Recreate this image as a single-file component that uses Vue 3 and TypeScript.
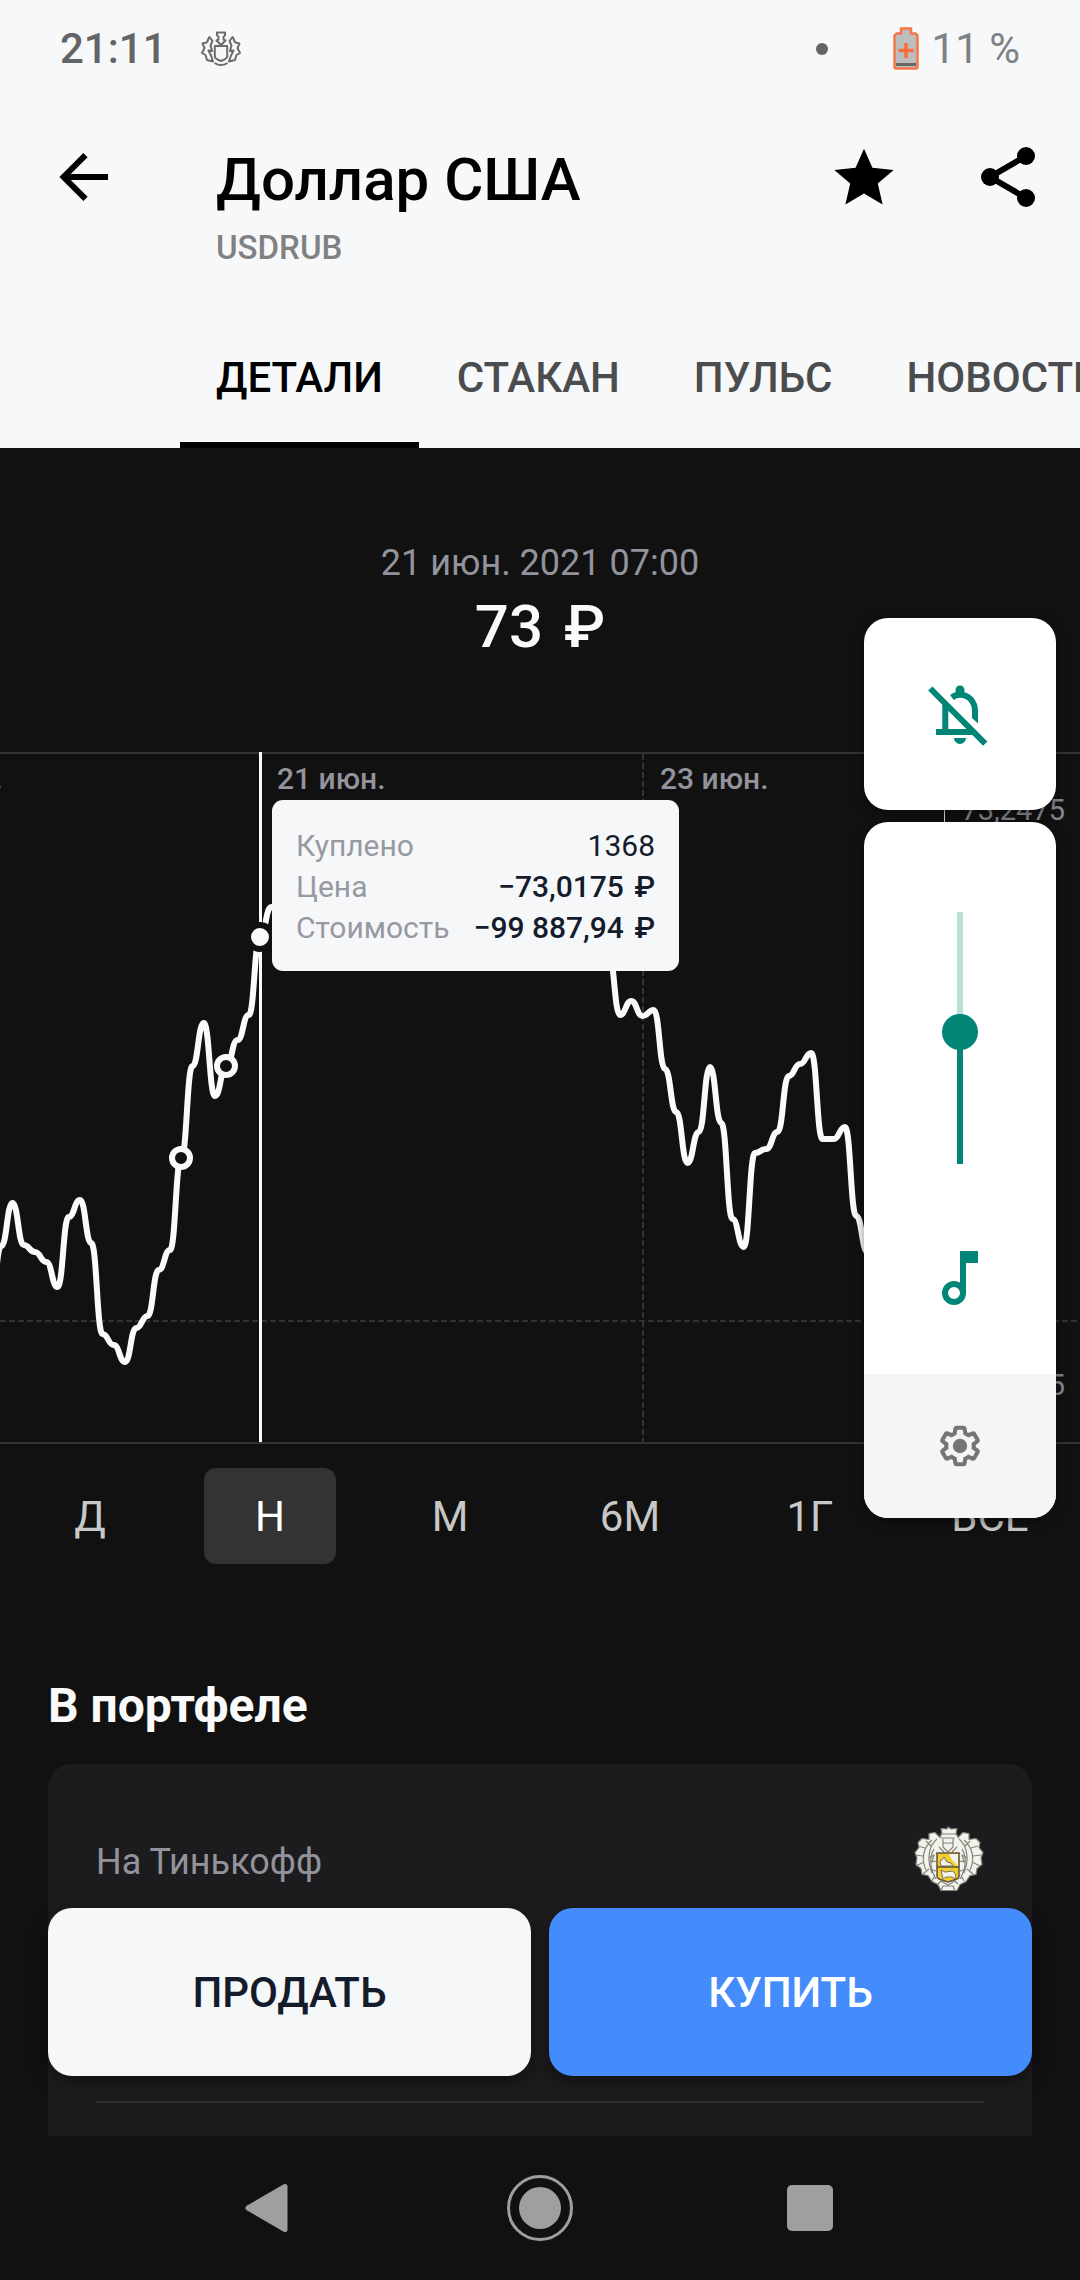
<script setup lang="ts">
import { computed, ref } from 'vue'

interface Tab {
  id: string
  label: string
}

interface TradeRow {
  label: string
  value: string
  currency: string
}

const tabs: Tab[] = [
  { id: 'details', label: 'ДЕТАЛИ' },
  { id: 'book', label: 'СТАКАН' },
  { id: 'pulse', label: 'ПУЛЬС' },
  { id: 'news', label: 'НОВОСТИ' },
]
const activeTab = ref('details')

const periods: string[] = ['Д', 'Н', 'М', '6М', '1Г', 'ВСЕ']
const activePeriod = ref('Н')

const trade: TradeRow[] = [
  { label: 'Куплено', value: '1368', currency: '' },
  { label: 'Цена', value: '−73,0175', currency: '₽' },
  { label: 'Стоимость', value: '−99 887,94', currency: '₽' },
]

// Quotes are evenly spaced; ORIGIN is the x of the selected moment.
const STEP = 11.25
const ORIGIN = 260
const before: number[] = [
  560, 494, 451, 493, 500, 510, 535, 465, 448, 491, 582, 593, 610, 576, 564, 518, 498, 406, 314,
  271, 344, 314, 288, 263, 185, 155,
]
const after: number[] = [
  203, 263, 249, 264, 258, 317, 360, 411, 380, 315, 371, 467, 495, 401, 397, 380, 324, 312, 301,
  387, 387, 375, 464, 500,
]
const points = [
  ...before.map((y, i) => ({ x: ORIGIN + (i - 24) * STEP, y })),
  ...after.map((y, i) => ({ x: ORIGIN + (i + 31) * STEP, y })),
]
const linePath = points
  .map((p, i) => {
    if (i === 0) return `M${p.x} ${p.y}`
    const prev = points[i - 1]
    const mid = (prev.x + p.x) / 2
    return `C${mid} ${prev.y} ${mid} ${p.y} ${p.x} ${p.y}`
  })
  .join('')

const deals = [
  { x: 181, y: 406 },
  { x: 226, y: 314 },
]

const volume = ref(53)
const volumeFill = computed(() => `${18 + (216 * volume.value) / 100}px`)
</script>

<template>
  <div class="screen">
    <header class="header">
      <div class="status">
        <span class="clock">21:11</span>
        <svg class="status-crest" viewBox="0 0 42 36" aria-hidden="true">
          <g fill="none" stroke="#6b6c6d" stroke-width="2" stroke-linejoin="round">
            <path d="M17 1.500h8v3l-1.500 1v3l2 1-4.500 4.500-4.500-4.500 2-1v-3l-1.500-1z" />
            <path d="M14.800 15h12.400v10.500c0 2-2 3-6.200 4.500-4.200-1.500-6.200-2.500-6.200-4.500z" />
            <path d="M14.500 32c4 2.500 9 2.500 13 0" />
            <path d="M9.500 6c-2 2-1 4-3 5.500l-4 1 2 4.500-2.500 5 3.500 2 1.500 5 6 1.500-2-6-2.500-5 3.500.5-1.500-5.500 2-4.500z" />
            <path transform="matrix(-1 0 0 1 42 0)" d="M9.500 6c-2 2-1 4-3 5.500l-4 1 2 4.500-2.500 5 3.500 2 1.500 5 6 1.500-2-6-2.500-5 3.500.5-1.500-5.500 2-4.500z" />
          </g>
        </svg>
        <span class="dot"></span>
        <svg class="battery" viewBox="0 0 26 44" aria-hidden="true">
          <path d="M8 1.500h10v5h4.500l2 2V40q0 1.500-1.500 1.500H3Q1.500 41.500 1.500 40V8.500l2-2H8z" fill="#bdbdbd" stroke="#f7754a" stroke-width="2.500" />
          <path d="M3 37.500h20" stroke="#666" stroke-width="3" />
          <path d="M13 16v15M5.500 23.500h15" stroke="#f76d3c" stroke-width="3.500" />
        </svg>
        <span class="charge">11 %</span>
      </div>

      <div class="toolbar">
        <button class="icon-button" type="button" aria-label="Назад">
          <svg viewBox="0 0 24 24"><path d="M20 12H5.500M12.500 4.700 5.200 12l7.300 7.300" fill="none" stroke="#000" stroke-width="2" /></svg>
        </button>
        <div class="heading">
          <h1>Доллар США</h1>
          <p>USDRUB</p>
        </div>
        <button class="icon-button" type="button" aria-label="В избранное">
          <svg viewBox="0 0 24 24"><path d="M12 2.600 14.800 8.900 21.900 9.700 16.600 14.200 18.200 21.200 12 17.500 5.800 21.200 7.400 14.200 2.100 9.700 9.200 8.900z" /></svg>
        </button>
        <button class="icon-button" type="button" aria-label="Поделиться">
          <svg viewBox="0 0 24 24">
            <path d="M18 5 6 12l12 7" fill="none" stroke="#000" stroke-width="2" />
            <circle cx="18" cy="5" r="3" /><circle cx="6" cy="12" r="3" /><circle cx="18" cy="19" r="3" />
          </svg>
        </button>
      </div>

      <nav class="tabs">
        <button
          v-for="tab in tabs"
          :key="tab.id"
          type="button"
          :class="['tab', { active: tab.id === activeTab }]"
          @click="activeTab = tab.id"
        >{{ tab.label }}</button>
      </nav>
    </header>

    <main class="content">
      <section class="quote">
        <time datetime="2021-06-21T07:00">21 июн. 2021 07:00</time>
        <strong>73 <span class="currency">₽</span></strong>
      </section>

      <section class="chart">
        <svg class="plot" viewBox="0 0 1080 692">
          <g stroke="#333" stroke-width="2">
            <path d="M0 1H1080M0 691H1080" />
            <path d="M643 2V690M0 569H1080" stroke-dasharray="6 3" />
          </g>
          <g class="dates">
            <text x="-106" y="37">19 июн.</text>
            <text x="277" y="37">21 июн.</text>
            <text x="660" y="37">23 июн.</text>
          </g>
          <g class="prices" text-anchor="end">
            <text x="1065" y="68">73,2475</text>
            <text x="1065" y="643">72,0475</text>
          </g>
          <path d="M944.500 50V90" stroke="#ddd" />
          <path d="M260.500 0V690" stroke="#fafafa" stroke-width="3" />
          <path :d="linePath" fill="none" stroke="#fafafa" stroke-width="6" stroke-linejoin="round" />
          <circle v-for="deal in deals" :key="deal.x" :cx="deal.x" :cy="deal.y" r="9" fill="#111" stroke="#fafafa" stroke-width="6" />
          <circle cx="260" cy="185" r="12" fill="#fafafa" stroke="#111" stroke-width="6" />
        </svg>
        <dl class="tooltip">
          <div v-for="row in trade" :key="row.label">
            <dt>{{ row.label }}</dt>
            <dd :class="{ strong: row.currency }">{{ row.value }}<template v-if="row.currency">&nbsp;<span class="currency">{{ row.currency }}</span></template></dd>
          </div>
        </dl>
      </section>

      <div class="periods">
        <button
          v-for="period in periods"
          :key="period"
          type="button"
          :class="{ active: period === activePeriod }"
          @click="activePeriod = period"
        ><span>{{ period }}</span></button>
      </div>

      <section class="portfolio">
        <h2>В портфеле</h2>
        <div class="card">
          <div class="account">
            <span>На Тинькофф</span>
            <svg viewBox="0 0 72 72" aria-hidden="true">
              <g stroke="#85847b" stroke-width="1.200" stroke-linejoin="round">
                <path d="M36 3l3 2 6-.5-1 5 2 4 5-5 6 1 0 6 7-1 4 4-1 5 4 5-2 5 1 7-5 4-1 6-6 1-4 6-6 3-3 6H29l-3-6-6-3-4-6-6-1-1-6-5-4 1-7-2-5 4-5-1-5 4-4 7 1 0-6 6-1 5 5 2-4-1-5 6 .5z" fill="#f3f2ec" />
                <path d="M28 10h16M29 14h14M31 15v8l5 5 5-5v-8M31 19h10M27 23l5 5M45 23l-5 5" fill="none" />
                <path d="M25 15c-9 7-10 22-5 34M20 16c-9 8-11 19-6 30M6 22l7 2M3 31l8 1M4 42l8-4M11 50l6-5M20 57l3-6M22 25c-5 8-4 20 2 30M14 17l5 5M17 34l5-3-2 7 4-1M21 46l3 1M26 60l3-3 7 4 7-4 3 3M29 67l2-5h10l2 5" fill="none" />
                <path d="M47 15c9 7 10 22 5 34M52 16c9 8 11 19 6 30M66 22l-7 2M69 31l-8 1M68 42l-8-4M61 50l-6-5M52 57l-3-6M50 25c5 8 4 20-2 30M58 17l-5 5M55 34l-5-3 2 7-4-1M51 46l-3 1" fill="none" />
              </g>
              <path d="M25 29h22v23q0 3-5 4l-6 2-6-2q-5-1-5-4z" fill="#f2d02c" />
              <path d="M37 30h9v12L40 36z" fill="#f3f2ec" />
              <path d="M28 38l4-5 3 5 4 1 2 3H29zM29 46l4 2 8-1 3 4-1 4-3-2h-6l-3 2z" fill="#f3f2ec" stroke="#77705a" />
              <path d="M25 29h22v23q0 3-5 4l-6 2-6-2q-5-1-5-4zM25 43h22" fill="none" stroke="#5f5138" stroke-width="1.500" />
            </svg>
          </div>
          <hr />
        </div>
      </section>

      <div class="actions">
        <button class="sell" type="button">ПРОДАТЬ</button>
        <button class="buy" type="button">КУПИТЬ</button>
      </div>
    </main>

    <footer class="system-nav">
      <button type="button" aria-label="Назад">
        <svg viewBox="0 0 72 72"><path d="M14 36 51 14.500V57.500z" fill="#9f9f9f" stroke="#9f9f9f" stroke-width="5" stroke-linejoin="round" /></svg>
      </button>
      <button type="button" aria-label="Домой">
        <svg viewBox="0 0 72 72"><circle cx="36" cy="36" r="31.500" fill="none" stroke="#9f9f9f" stroke-width="3" /><circle cx="36" cy="36" r="21" fill="#9f9f9f" /></svg>
      </button>
      <button type="button" aria-label="Недавние">
        <svg viewBox="0 0 72 72"><rect x="13" y="13" width="46" height="46" rx="5" fill="#9f9f9f" /></svg>
      </button>
    </footer>

    <aside class="volume">
      <button class="ringer" type="button" aria-label="Звук выключен">
        <svg viewBox="0 0 24 24">
          <g fill="none" stroke="#008577" stroke-width="2">
            <path d="M2.100 3.500 20.400 21.900M7.100 8.500V18M4 18H16.700" />
            <path d="M9.300 6.500Q10.500 5.600 12 5.600C15 5.600 17 8 17 11V13.400" />
          </g>
          <path d="M10 20h4a2 2 0 0 1-4 0zM16 13.300h2v1.900zM10.500 5.200V4a1.500 1.500 0 0 1 3 0v1.200z" fill="#008577" />
        </svg>
      </button>
      <div class="level">
        <input v-model.number="volume" type="range" min="0" max="100" aria-label="Громкость" :style="{ '--fill': volumeFill }" />
        <svg class="note" viewBox="0 0 24 24" aria-hidden="true">
          <path d="M12 3h6v4h-4v10h-2z" fill="#008577" />
          <circle cx="10" cy="17" r="3" fill="none" stroke="#008577" stroke-width="2" />
        </svg>
        <button class="settings" type="button" aria-label="Настройки звука">
          <svg viewBox="0 0 24 24">
            <path d="M19.430 12.980c.04-.32.07-.64.07-.98 0-.34-.03-.66-.07-.98l2.110-1.650c.19-.15.24-.42.12-.64l-2-3.460c-.09-.16-.26-.25-.44-.25-.06 0-.12.01-.17.03l-2.490 1c-.52-.4-1.080-.73-1.690-.98l-.38-2.650C14.460 2.180 14.250 2 14 2h-4c-.25 0-.46.18-.49.42l-.38 2.650c-.61.25-1.170.59-1.690.98l-2.490-1c-.06-.02-.12-.03-.18-.03-.17 0-.34.09-.43.25l-2 3.460c-.13.22-.07.49.12.64l2.110 1.650c-.04.32-.07.65-.07.98 0 .33.03.66.07.98l-2.110 1.650c-.19.15-.24.42-.12.64l2 3.460c.09.16.26.25.44.25.06 0 .12-.01.17-.03l2.490-1c.52.4 1.080.73 1.690.98l.38 2.650c.03.24.24.42.49.42h4c.25 0 .46-.18.49-.42l.38-2.650c.61-.25 1.170-.59 1.690-.98l2.490 1c.06.02.12.03.18.03.17 0 .34-.09.43-.25l2-3.460c.12-.22.07-.49-.12-.64l-2.110-1.650z" fill="none" stroke="#757575" stroke-width="2.200" />
            <circle cx="12" cy="12" r="3.900" fill="#757575" />
          </svg>
        </button>
      </div>
    </aside>
  </div>
</template>

<style>
body {
  background: #111;
}
</style>

<style scoped>
.screen {
  position: relative;
  display: flex;
  flex-direction: column;
  min-height: 100vh;
  overflow: hidden;
  background: #111;
  color: #fafafa;
  font-family: Roboto, "Noto Sans", sans-serif;
}

button {
  margin: 0;
  padding: 0;
  border: 0;
  background: none;
  color: inherit;
  font: inherit;
}

svg {
  display: block;
  overflow: visible;
}

h1,
h2,
p,
dl,
dd {
  margin: 0;
}

.header {
  background: #f7f8fa;
  color: #000;
}

.status {
  display: flex;
  align-items: center;
  padding: 25px 60px 0;
  font-size: 42px;
  line-height: 48px;
}

.clock {
  color: #636465;
  font-weight: 500;
}

.status-crest {
  width: 42px;
  height: 36px;
  margin-left: 33px;
}

.dot {
  width: 12px;
  height: 12px;
  margin-left: auto;
  border-radius: 50%;
  background: #636465;
}

.battery {
  width: 26px;
  height: 44px;
  margin: 0 13px 0 65px;
}

.charge {
  color: #808182;
}

.toolbar {
  display: flex;
  align-items: flex-start;
  gap: 72px;
  padding: 68px 36px 0 48px;
}

.icon-button,
.icon-button svg {
  width: 72px;
  height: 72px;
}

.heading {
  flex: 1;
  margin: 3px 0 0 24px;
}

.heading h1 {
  font-size: 60px;
  font-weight: 500;
  line-height: 72px;
}

.heading p {
  margin-top: 12px;
  color: #808182;
  font-size: 33px;
  font-weight: 500;
  line-height: 40px;
}

.tabs {
  display: flex;
  gap: 2px;
  margin-top: 40px;
  padding-left: 180px;
  overflow: hidden;
}

.tab {
  flex: none;
  padding: 46px 36px 40px;
  border-bottom: 6px solid transparent;
  color: #4b4c4d;
  font-size: 42px;
  font-weight: 500;
  line-height: 48px;
}

.tab.active {
  border-color: #000;
  color: #000;
}

.content {
  position: relative;
  display: flex;
  flex: 1;
  flex-direction: column;
}

.quote {
  display: flex;
  flex-direction: column;
  align-items: center;
  gap: 4px;
  padding: 91px 0 89px;
}

.quote time {
  color: #92939c;
  font-size: 36px;
  line-height: 48px;
}

.quote strong {
  font-size: 60px;
  font-weight: 500;
  line-height: 72px;
}

.quote .currency {
  margin-left: 6px;
}

.chart {
  position: relative;
}

.plot {
  width: 100%;
  height: auto;
  overflow: hidden;
}

.dates {
  fill: #92939c;
  font-size: 30px;
  font-weight: 500;
}

.prices {
  fill: #85868f;
  font-size: 29px;
}

.tooltip {
  position: absolute;
  top: 48px;
  left: 272px;
  display: flex;
  flex-direction: column;
  box-sizing: border-box;
  width: 407px;
  padding: 25px 24px 23px;
  border-radius: 11px;
  background: #f6f7f9;
  color: #141c2c;
  font-size: 30px;
  line-height: 41px;
}

.tooltip div {
  display: flex;
  justify-content: space-between;
}

.tooltip dt {
  color: #9799a2;
}

.tooltip .strong {
  font-weight: 500;
}

.tooltip .currency {
  margin-left: 3px;
}

.periods {
  display: grid;
  grid-template-columns: repeat(6, 1fr);
  padding-top: 24px;
}

.periods button {
  display: flex;
  justify-content: center;
  color: #c8c8c8;
  font-size: 42px;
  line-height: 94px;
}

.periods span {
  width: 132px;
  padding-top: 2px;
  border-radius: 12px;
}

.periods .active span {
  background: #333;
  color: #fff;
}

.portfolio {
  display: flex;
  flex: 1;
  flex-direction: column;
  gap: 28px;
  padding: 112px 48px 0;
}

.portfolio h2 {
  font-size: 48px;
  font-weight: 700;
  line-height: 60px;
}

.card {
  display: flex;
  flex: 1;
  flex-direction: column;
  justify-content: space-between;
  box-sizing: border-box;
  min-height: 300px;
  padding: 60px 48px 33px;
  border-radius: 24px 24px 0 0;
  background: #1c1c1e;
}

.account {
  display: flex;
  align-items: center;
  justify-content: space-between;
  color: #92939c;
  font-size: 36px;
  line-height: 48px;
}

.account span {
  padding-top: 4px;
}

.account svg {
  width: 72px;
  height: 72px;
}

.card hr {
  width: 100%;
  height: 2px;
  margin: 0;
  border: 0;
  background: #2d2d2f;
}

.actions {
  position: absolute;
  right: 48px;
  bottom: 60px;
  left: 48px;
  display: grid;
  grid-template-columns: 1fr 1fr;
  gap: 18px;
}

.actions button {
  padding-top: 2px;
  border-radius: 24px;
  box-shadow: 0 6px 18px rgba(0, 0, 0, 0.4);
  font-size: 42px;
  font-weight: 500;
  line-height: 166px;
}

.actions .sell {
  background: #f6f7f9;
  color: #141c2c;
}

.actions .buy {
  background: #448cfb;
  color: #fff;
}

.system-nav {
  display: grid;
  grid-template-columns: repeat(3, 25%);
  justify-content: center;
  align-items: center;
  height: 144px;
  background: #111;
}

.system-nav button {
  display: flex;
  justify-content: center;
}

.system-nav svg {
  width: 72px;
  height: 72px;
}

.volume {
  position: absolute;
  top: 618px;
  right: 24px;
  display: flex;
  flex-direction: column;
  gap: 12px;
  width: 192px;
}

.ringer,
.level {
  border-radius: 24px;
  background: #fff;
  box-shadow: 0 3px 12px rgba(0, 0, 0, 0.4);
}

.ringer {
  display: flex;
  align-items: center;
  justify-content: center;
  height: 192px;
}

.ringer svg,
.note {
  width: 72px;
  height: 72px;
}

.level {
  display: flex;
  flex-direction: column;
  align-items: center;
  padding-top: 90px;
  overflow: hidden;
}

.level input {
  width: 36px;
  height: 252px;
  margin: 0;
  appearance: none;
  background: linear-gradient(to top, #008577 var(--fill), #b8dfda var(--fill)) center / 6px 100% no-repeat;
  direction: rtl;
  writing-mode: vertical-lr;
}

.level input::-webkit-slider-thumb {
  width: 36px;
  height: 36px;
  appearance: none;
  border-radius: 50%;
  background: #008577;
}

.note {
  margin: 78px 0 60px;
}

.settings {
  display: flex;
  align-items: center;
  justify-content: center;
  width: 100%;
  height: 144px;
  background: #f5f5f5;
}

.settings svg {
  width: 44px;
  height: 44px;
}
</style>
